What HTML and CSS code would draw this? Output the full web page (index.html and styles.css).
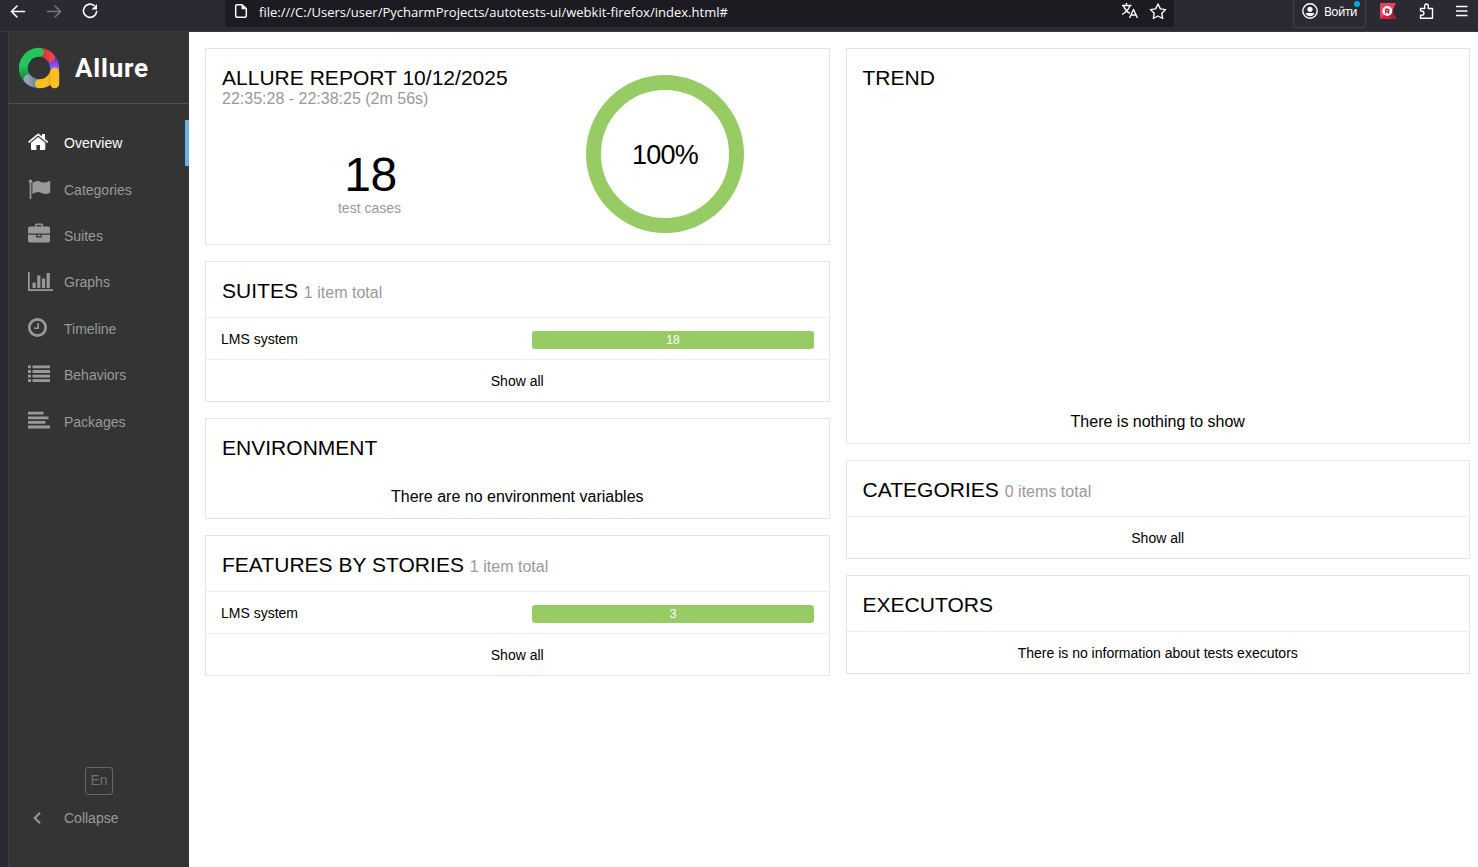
FILE: index.html
```
<!DOCTYPE html>
<html lang="en">
<head>
<meta charset="utf-8">
<title>Allure Report</title>
<link rel="stylesheet" href="styles.css">
</head>
<body>
<header class="toolbar">
  <div class="nav-buttons">
    <svg width="100" height="24" viewBox="0 0 100 24" fill="none" stroke-width="1.6" stroke-linecap="round" stroke-linejoin="round">
      <path d="M16.500 11.500H3.500M9 6L3.500 11.500L9 17" stroke="#fbfbfe"/>
      <path d="M39.500 11.500H52.500M47 6L52.500 11.500L47 17" stroke="#77767e"/>
      <path d="M86 5.500A6.600 6.600 0 1 0 88.600 11.500" stroke="#fbfbfe"/>
      <path d="M89 4V9.500H83.500Z" fill="#fbfbfe" stroke="none"/>
    </svg>
  </div>
  <div class="address">
    <svg class="page-icon" width="14" height="16" viewBox="0 0 14 16"><path d="M3 1.800H8L12.300 5.500V13Q12.300 14.200 11 14.200H3Q1.700 14.200 1.700 13V3Q1.700 1.800 3 1.800Z" fill="none" stroke="#fbfbfe" stroke-width="1.500"/><path d="M7.500 1.500V6.300H12.500Z" fill="#fbfbfe"/></svg>
    <span class="url">file:///C:/Users/user/PycharmProjects/autotests-ui/webkit-firefox/index.html#</span>
    <svg class="address-actions" width="46" height="20" viewBox="0 0 46 20" fill="none" stroke="#fbfbfe" stroke-width="1.400" stroke-linejoin="round">
      <path d="M0 3.500H9.500M4.500 1V3.500M1.500 4Q3.500 9 8 11.500M7.800 4Q6 9 0 12.500"/>
      <path d="M7.500 16L11.500 7.500L15.500 16M9 13H14"/>
      <path d="M36 2L38.400 6.900L43.600 7.600L39.800 11.300L40.700 16.500L36 14L31.300 16.500L32.200 11.300L28.400 7.600L33.600 6.900Z"/>
    </svg>
  </div>
  <div class="account">
    <svg width="16" height="16" viewBox="0 0 16 16"><circle cx="8" cy="8" r="7.200" fill="none" stroke="#fbfbfe" stroke-width="1.400"/><circle cx="8" cy="6.300" r="2.600" fill="#fbfbfe"/><path d="M3.600 10H12.400Q11 13.200 8 13.200T3.600 10Z" fill="#fbfbfe"/></svg>
    <span>Войти</span>
    <i class="account-dot"></i>
  </div>
  <div class="extensions">
    <svg width="16" height="16" viewBox="0 0 16 16"><path d="M0 0H16L12.500 8L16 16H0Z" fill="#ed3f59"/><path d="M9 10L12.500 8L16 16H9Z" fill="#b3162e"/><path d="M0 16L6 10L12 16Z" fill="#d91e3c"/><circle cx="7.300" cy="8" r="5" fill="#fff"/><path d="M5.800 10.500V6.200H7.700Q9 6.200 9 7.300T7.700 8.400H6.500M7.500 8.400L9 10.500" fill="none" stroke="#c51d37" stroke-width="1.400"/></svg>
    <svg class="puzzle" width="16" height="17" viewBox="0 0 16 17"><path d="M1.500 8V5.500H5.700V3Q5.700 1 7.500 1T9.300 3V5.500H13.500V15.300H1.500V12.300H3Q4.900 12.300 4.900 10.300T3 8.300H1.500" fill="none" stroke="#fbfbfe" stroke-width="1.400" stroke-linejoin="round"/></svg>
    <svg width="14" height="14" viewBox="0 0 14 14"><path d="M1 2.500H12.500M1 7H12.500M1 11.500H12.500" stroke="#fbfbfe" stroke-width="1.400"/></svg>
  </div>
</header>

<div class="page">
  <aside class="sidebar">
    <div class="brand">
      <svg width="42" height="42" viewBox="1 0 42 42" fill="none" stroke-width="9" stroke-linecap="round">
        <defs>
          <linearGradient id="green" x1="0" y1="1" x2="0" y2="0"><stop offset="0" stop-color="#168b3e"/><stop offset=".5" stop-color="#22c55e"/></linearGradient>
          <linearGradient id="red" x1="0" y1="0" x2="1" y2="0"><stop offset="0" stop-color="#c92d2d"/><stop offset="1" stop-color="#ef4444"/></linearGradient>
          <linearGradient id="purple" x1="0" y1="0" x2="0" y2="1"><stop offset="0" stop-color="#6d28d9"/><stop offset="1" stop-color="#9061fa"/></linearGradient>
          <linearGradient id="grey" x1="1" y1="0" x2="0" y2="0"><stop offset="0" stop-color="#64748b"/><stop offset="1" stop-color="#94a3b8"/></linearGradient>
          <linearGradient id="gold" x1="0" y1="0" x2="1" y2="0"><stop offset="0" stop-color="#fbbf24"/><stop offset=".55" stop-color="#fbbf24"/><stop offset=".85" stop-color="#d98b0b"/><stop offset="1" stop-color="#fbbf24"/></linearGradient>
        </defs>
        <path d="M33 11.100A15.700 15.700 0 0 1 36.700 21" stroke="url(#purple)"/>
        <path d="M23 5.400A15.700 15.700 0 0 1 32.500 10.500" stroke="url(#red)"/>
        <path d="M9.300 31.400A15.700 15.700 0 0 1 21.500 5.300" stroke="url(#green)"/>
        <path d="M10 32.100A15.700 15.700 0 0 0 20 36.700" stroke="url(#grey)"/>
        <path d="M21.500 36.700A15.700 15.700 0 0 0 36.700 25" stroke="url(#gold)"/>
        <path d="M36.700 25.500V36.700" stroke="#fbbf24"/>
      </svg>
      <span class="brand-name">Allure</span>
    </div>
    <nav class="menu">
      <a class="menu-item active"><svg class="icon" viewBox="0 1 28 24"><path d="M2 11.800L11.600 3.800Q12.200 3.400 12.800 3.800L16 6.500V4H19V9L22.300 11.800L21.300 13L12.200 5.600L3.100 13Z"/><path d="M5 12.700L12.200 6.900L19.300 12.700V19Q19.300 20 18.300 20H14V15H10.400V20H6Q5 20 5 19Z"/></svg><span>Overview</span></a>
      <a class="menu-item"><svg class="icon" viewBox="0 0 28 24"><circle cx="4.500" cy="4.200" r="1.700"/><path d="M3.700 4H5.300V22H3.700Z"/><path d="M6.400 5.800Q10 3.500 13 4.200C16 5.300 18 6.700 24.200 3.700V15.500C18 19.300 15.500 15 12 15Q9.500 15 6.400 17Z"/></svg><span>Categories</span></a>
      <a class="menu-item"><svg class="icon" viewBox="0 1 28 24"><path d="M9 4.500V3Q9 1.500 10.500 1.500H15.500Q17 1.500 17 3V4.500H22Q24 4.500 24 6.500V11.500H2V6.500Q2 4.500 4 4.500ZM10.500 4.500H15.500V3H10.500Z" fill-rule="evenodd"/><path d="M2 12.700H10.200V15.500H15.800V12.700H24V18.500Q24 20.500 22 20.500H4Q2 20.500 2 18.500Z"/><path d="M11.500 12.700H14.500V14.200H11.500Z"/></svg><span>Suites</span></a>
      <a class="menu-item"><svg class="icon" viewBox="0 0 28 24"><path d="M2 2H3.700V19.300H27V21H2ZM6.500 12.500H9.700V18H6.500ZM11.200 5.500H14.400V18H11.200ZM15.900 8.500H19.100V18H15.900ZM20.600 3H23.800V18H20.600Z"/></svg><span>Graphs</span></a>
      <a class="menu-item"><svg class="icon" viewBox="0 0 28 24"><circle cx="11.500" cy="11.500" r="8.200" fill="none" stroke="currentColor" stroke-width="2.700"/><path d="M12.200 7V12.300H8" fill="none" stroke="currentColor" stroke-width="1.600"/></svg><span>Timeline</span></a>
      <a class="menu-item"><svg class="icon" viewBox="0 0 28 24"><path d="M2 2.500H5V5.300H2ZM6.500 2.500H24V5.300H6.500ZM2 7.100H5V9.900H2ZM6.500 7.100H24V9.900H6.500ZM2 11.700H5V14.500H2ZM6.500 11.700H24V14.500H6.500ZM2 16.300H5V19.100H2ZM6.500 16.300H24V19.100H6.500Z"/></svg><span>Behaviors</span></a>
      <a class="menu-item"><svg class="icon" viewBox="0 0 28 24"><path d="M2 2.800H17.500V5.600H2ZM2 7.400H22.500V10.200H2ZM2 12H19.500V14.800H2ZM2 16.600H24V19.400H2Z"/></svg><span>Packages</span></a>
    </nav>
    <div class="sidebar-footer">
      <span class="language">En</span>
      <a class="menu-item collapse"><svg class="icon" viewBox="0 0 28 24"><path d="M14 6.800L8.700 12L14 17.200" fill="none" stroke="currentColor" stroke-width="2"/></svg><span>Collapse</span></a>
    </div>
  </aside>

  <main class="widgets">
    <div class="column">
      <section class="card summary">
        <div class="summary-info">
          <h2>ALLURE REPORT 10/12/2025</h2>
          <div class="period">22:35:28 - 22:38:25 (2m 56s)</div>
          <div class="total">18</div>
          <div class="total-label">test cases</div>
        </div>
        <div class="chart"><span>100%</span></div>
      </section>
      <section class="card">
        <h2 class="head">SUITES <small>1 item total</small></h2>
        <div class="row"><span>LMS system</span><span class="bar">18</span></div>
        <div class="row show-all">Show all</div>
      </section>
      <section class="card environment">
        <h2 class="head">ENVIRONMENT</h2>
        <p class="message">There are no environment variables</p>
      </section>
      <section class="card">
        <h2 class="head">FEATURES BY STORIES <small>1 item total</small></h2>
        <div class="row"><span>LMS system</span><span class="bar">3</span></div>
        <div class="row show-all">Show all</div>
      </section>
    </div>
    <div class="column">
      <section class="card trend">
        <h2 class="head">TREND</h2>
        <p class="message">There is nothing to show</p>
      </section>
      <section class="card">
        <h2 class="head">CATEGORIES <small>0 items total</small></h2>
        <div class="row show-all">Show all</div>
      </section>
      <section class="card">
        <h2 class="head">EXECUTORS</h2>
        <div class="row show-all">There is no information about tests executors</div>
      </section>
    </div>
  </main>
</div>
</body>
</html>
```
FILE: styles.css
```
* { box-sizing: border-box; }
body { margin: 0; height: 867px; overflow: hidden; background: #fff; color: #000; font-family: "Liberation Sans", Arial, sans-serif; font-size: 14px; }
svg { display: block; flex: none; }
h2, p { margin: 0; font-weight: 400; }

.toolbar { display: flex; height: 32px; background: #2b2a33; border-bottom: 1px solid #3b3a42; color: #fbfbfe; font-family: "Noto Sans", "Open Sans", sans-serif; }
.nav-buttons { width: 225px; padding-left: 8px; }
.address { display: flex; width: 949px; height: 27px; padding: 0 6px 0 9px; background: #1c1b22; border-radius: 0 0 4px 4px; }
.page-icon { margin-top: 3px; }
.url { margin-left: 11px; flex: 1; font-family: "Open Sans", sans-serif; font-size: 13px; letter-spacing: .015px; line-height: 25px; white-space: nowrap; }
.address-actions { margin-top: 2px; }
.account { position: relative; display: flex; gap: 6px; width: 73px; height: 28px; margin-left: 119px; padding: 3px 0 0 8px; border: 1px solid #42414d; border-top: 0; border-radius: 0 0 4px 4px; font-size: 12px; letter-spacing: -.5px; line-height: 17px; }
.account-dot { position: absolute; top: 1px; right: 5px; width: 6px; height: 6px; border-radius: 50%; background: #00a8ee; }
.extensions { display: flex; margin-left: 14px; padding-top: 3px; }
.puzzle { margin: 0 20px 0 23px; }
.extensions svg:last-child { margin-top: 1px; }

.page { display: flex; height: 835px; }
.sidebar { display: flex; flex-direction: column; width: 189px; border-left: 8px solid #2b2933; background: #343434; box-shadow: inset 1px 0 #3d3c40; color: #999; }
.brand { display: flex; height: 72px; margin-left: 1px; padding: 15px 0 0 10px; border-bottom: 1px solid #505050; }
.brand-name { margin-left: 14px; color: #fff; font-family: Roboto, sans-serif; font-size: 26px; font-weight: 700; letter-spacing: .8px; line-height: 42px; }
.menu { padding-top: 16px; }
.menu-item { display: flex; align-items: center; height: 46.4px; padding: 0 0 1px 18px; }
.menu-item span { padding-top: 1px; }
.icon { width: 28px; height: 24px; margin-right: 10px; fill: currentColor; }
.active { color: #fff; border-right: 4px solid #6cb0e8; }
.sidebar-footer { margin-top: auto; padding-bottom: 26px; }
.sidebar-footer .menu-item { padding-bottom: 0; }
.language { display: block; width: 28px; height: 28px; margin-left: 77px; border: 1px solid #666; border-radius: 3px; color: #707070; line-height: 25px; text-align: center; }

.widgets { display: flex; flex: 1; gap: 16px; padding: 16px 8px 0 16px; }
.column { display: flex; flex: 1; flex-direction: column; gap: 16px; }
.card { border: 1px solid #e5e5e5; background: #fff; }
h2 { font-size: 21px; letter-spacing: .02px; line-height: 24px; white-space: nowrap; }
h2 small { color: #999; font-size: 16px; }
.head { height: 55px; padding: 17px 16px 0; }
.row { display: flex; align-items: center; justify-content: space-between; height: 42px; padding: 0 15px; border-top: 1px solid #eceff1; }
.show-all { justify-content: center; }
.bar { width: 282px; height: 18px; margin-top: 2px; padding-left: 1px; border-radius: 3px; background: #97cc64; color: #fff; font-size: 12px; line-height: 18px; text-align: center; }
.message { font-size: 16px; line-height: 20px; text-align: center; }
.environment { height: 101px; }
.environment .message { padding-top: 13px; }
.trend { display: flex; flex-direction: column; height: 396px; }
.trend .message { margin-top: auto; padding-bottom: 11px; }
.summary { display: flex; height: 197px; }
.summary-info { width: 295px; margin-left: 16px; padding-top: 17px; }
.period { color: #999; font-size: 16px; line-height: 18px; }
.total { margin-top: 39px; padding-left: 2px; font-size: 48px; letter-spacing: -.5px; line-height: 56px; text-align: center; }
.total-label { color: #999; line-height: 12px; margin-top: -1px; text-align: center; }
.chart { width: 158px; height: 158px; margin: 26px 0 0 69px; border: 15px solid #97cc64; border-radius: 50%; font-size: 27px; letter-spacing: -.8px; line-height: 130px; text-align: center; }
```
